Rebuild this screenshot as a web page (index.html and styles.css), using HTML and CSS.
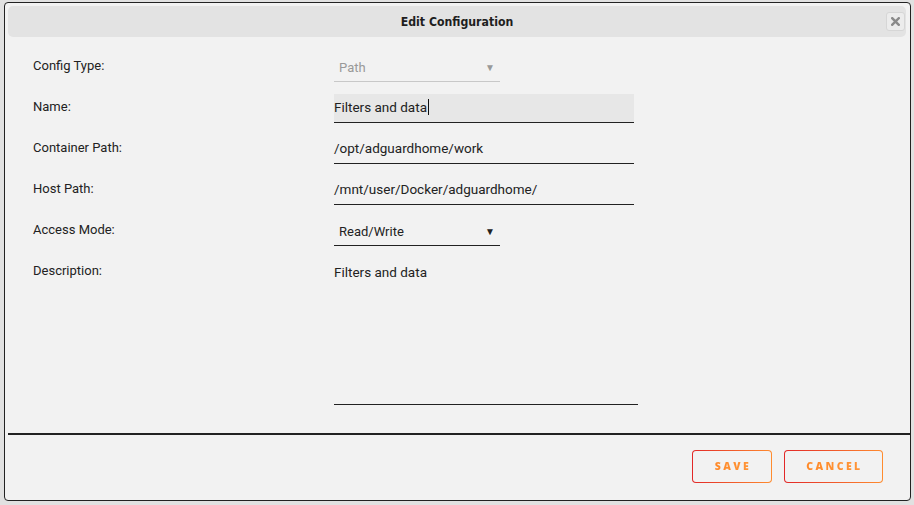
FILE: index.html
```html
<!DOCTYPE html>
<html>
<head>
<meta charset="utf-8">
<link rel="stylesheet" href="styles.css">
</head>
<body>
<div class="page">
  <div class="bg-row">Custom Port</div>
</div>
<div class="dialog">
  <div class="titlebar">
    <span class="title">Edit Configuration</span>
    <button class="close" aria-label="close">
      <svg width="9" height="9" viewBox="0 0 9 9"><path d="M1.2 1.2 L7.8 7.8 M7.8 1.2 L1.2 7.8" stroke="#8a8a8a" stroke-width="2.4" stroke-linecap="square"/></svg>
    </button>
  </div>
  <div class="form">
    <div class="row">
      <div class="label">Config Type:</div>
      <div class="field select disabled"><span>Path</span><span class="arrow">▼</span></div>
    </div>
    <div class="row">
      <div class="label">Name:</div>
      <div class="field input focused"><span>Filters and data</span><span class="caret"></span></div>
    </div>
    <div class="row">
      <div class="label">Container Path:</div>
      <div class="field input"><span>/opt/adguardhome/work</span></div>
    </div>
    <div class="row">
      <div class="label">Host Path:</div>
      <div class="field input"><span>/mnt/user/Docker/adguardhome/</span></div>
    </div>
    <div class="row">
      <div class="label">Access Mode:</div>
      <div class="field select"><span>Read/Write</span><span class="arrow">▼</span></div>
    </div>
    <div class="row desc">
      <div class="label">Description:</div>
      <div class="field textarea"><span>Filters and data</span></div>
    </div>
  </div>
  <div class="divider"></div>
  <div class="actions">
    <button class="btn save"><span>SAVE</span></button>
    <button class="btn cancel"><span>CANCEL</span></button>
  </div>
</div>
</body>
</html>
```
FILE: styles.css
```css
* { box-sizing: border-box; }
html, body { margin: 0; padding: 0; }
body {
  width: 914px;
  height: 505px;
  background: #e1e1e1;
  font-family: Roboto, "Liberation Sans", sans-serif;
  color: #222;
  overflow: hidden;
  position: relative;
}
.page { padding-left: 240px; }
.bg-row {
  margin-top: -11px;
  font-size: 13px;
  line-height: 14px;
  color: #333;
}
.dialog {
  position: absolute;
  left: 4px;
  top: 2px;
  width: 907px;
  height: 499px;
  background: #f2f2f2;
  border: 1.5px solid #222;
  border-radius: 4px;
  padding: 3px 4px 0 3px;
  display: flex;
  flex-direction: column;
}
.titlebar {
  height: 31px;
  background: #e3e3e3;
  border-radius: 5px;
  display: flex;
  align-items: center;
  justify-content: center;
  position: relative;
}
.title {
  font-family: "DejaVu Sans Condensed", "DejaVu Sans", sans-serif;
  font-stretch: condensed;
  font-weight: bold;
  font-size: 12.2px;
  color: #1e1e1e;
}
.close {
  position: absolute;
  right: 1px;
  top: 6px;
  width: 19px;
  height: 19px;
  padding: 0;
  background: #ececec;
  border: 1px solid #d6d6d6;
  border-radius: 3px;
  display: flex;
  align-items: center;
  justify-content: center;
}
.form {
  padding: 16px 0 0 25px;
  display: flex;
  flex-direction: column;
}
.row {
  display: flex;
  height: 41px;
  font-size: 13px;
}
.label {
  width: 301px;
  line-height: 25px;
}
.field {
  height: 29px;
  display: flex;
  align-items: center;
  padding-bottom: 3px;
  border-bottom: 1px solid #222;
  font-size: 13.5px;
}
.input { width: 300px; }
.input.focused { background: #e7e7e7; }
.caret {
  display: inline-block;
  width: 1px;
  height: 16px;
  background: #111;
  margin-left: 1px;
}
.select {
  width: 166px;
  padding: 0 5px 0 5px;
  justify-content: space-between;
}
.select span:first-child { font-size: 13px; }
.select.disabled { color: #999; border-bottom-color: #c8c8c8; }
.arrow { font-size: 10px; color: #222; }
.select.disabled .arrow { color: #999; }
.row.desc { height: 148px; }
.textarea {
  width: 304px;
  height: 147px;
  align-items: flex-start;
  padding-top: 6px;
}
.divider {
  margin-top: 27px;
  height: 1.5px;
  background: #222;
  margin-right: -4px;
}
.actions {
  display: flex;
  justify-content: flex-end;
  gap: 12px;
  padding: 15px 23px 0 0;
}
.btn {
  height: 33px;
  border: 1.5px solid transparent;
  border-radius: 4px;
  background: linear-gradient(#f2f2f2, #f2f2f2) padding-box,
              linear-gradient(90deg, #e22828, #ff8c2f) border-box;
  font-family: "Open Sans", sans-serif;
  font-weight: 800;
  font-size: 10.5px;
  letter-spacing: 2.4px;
  padding: 0 0 0 2px;
}
.btn span {
  background: linear-gradient(90deg, #ff8a2a, #ff9436);
  -webkit-background-clip: text;
  background-clip: text;
  color: transparent;
}
.save { width: 80px; }
.cancel { width: 99px; }
```
